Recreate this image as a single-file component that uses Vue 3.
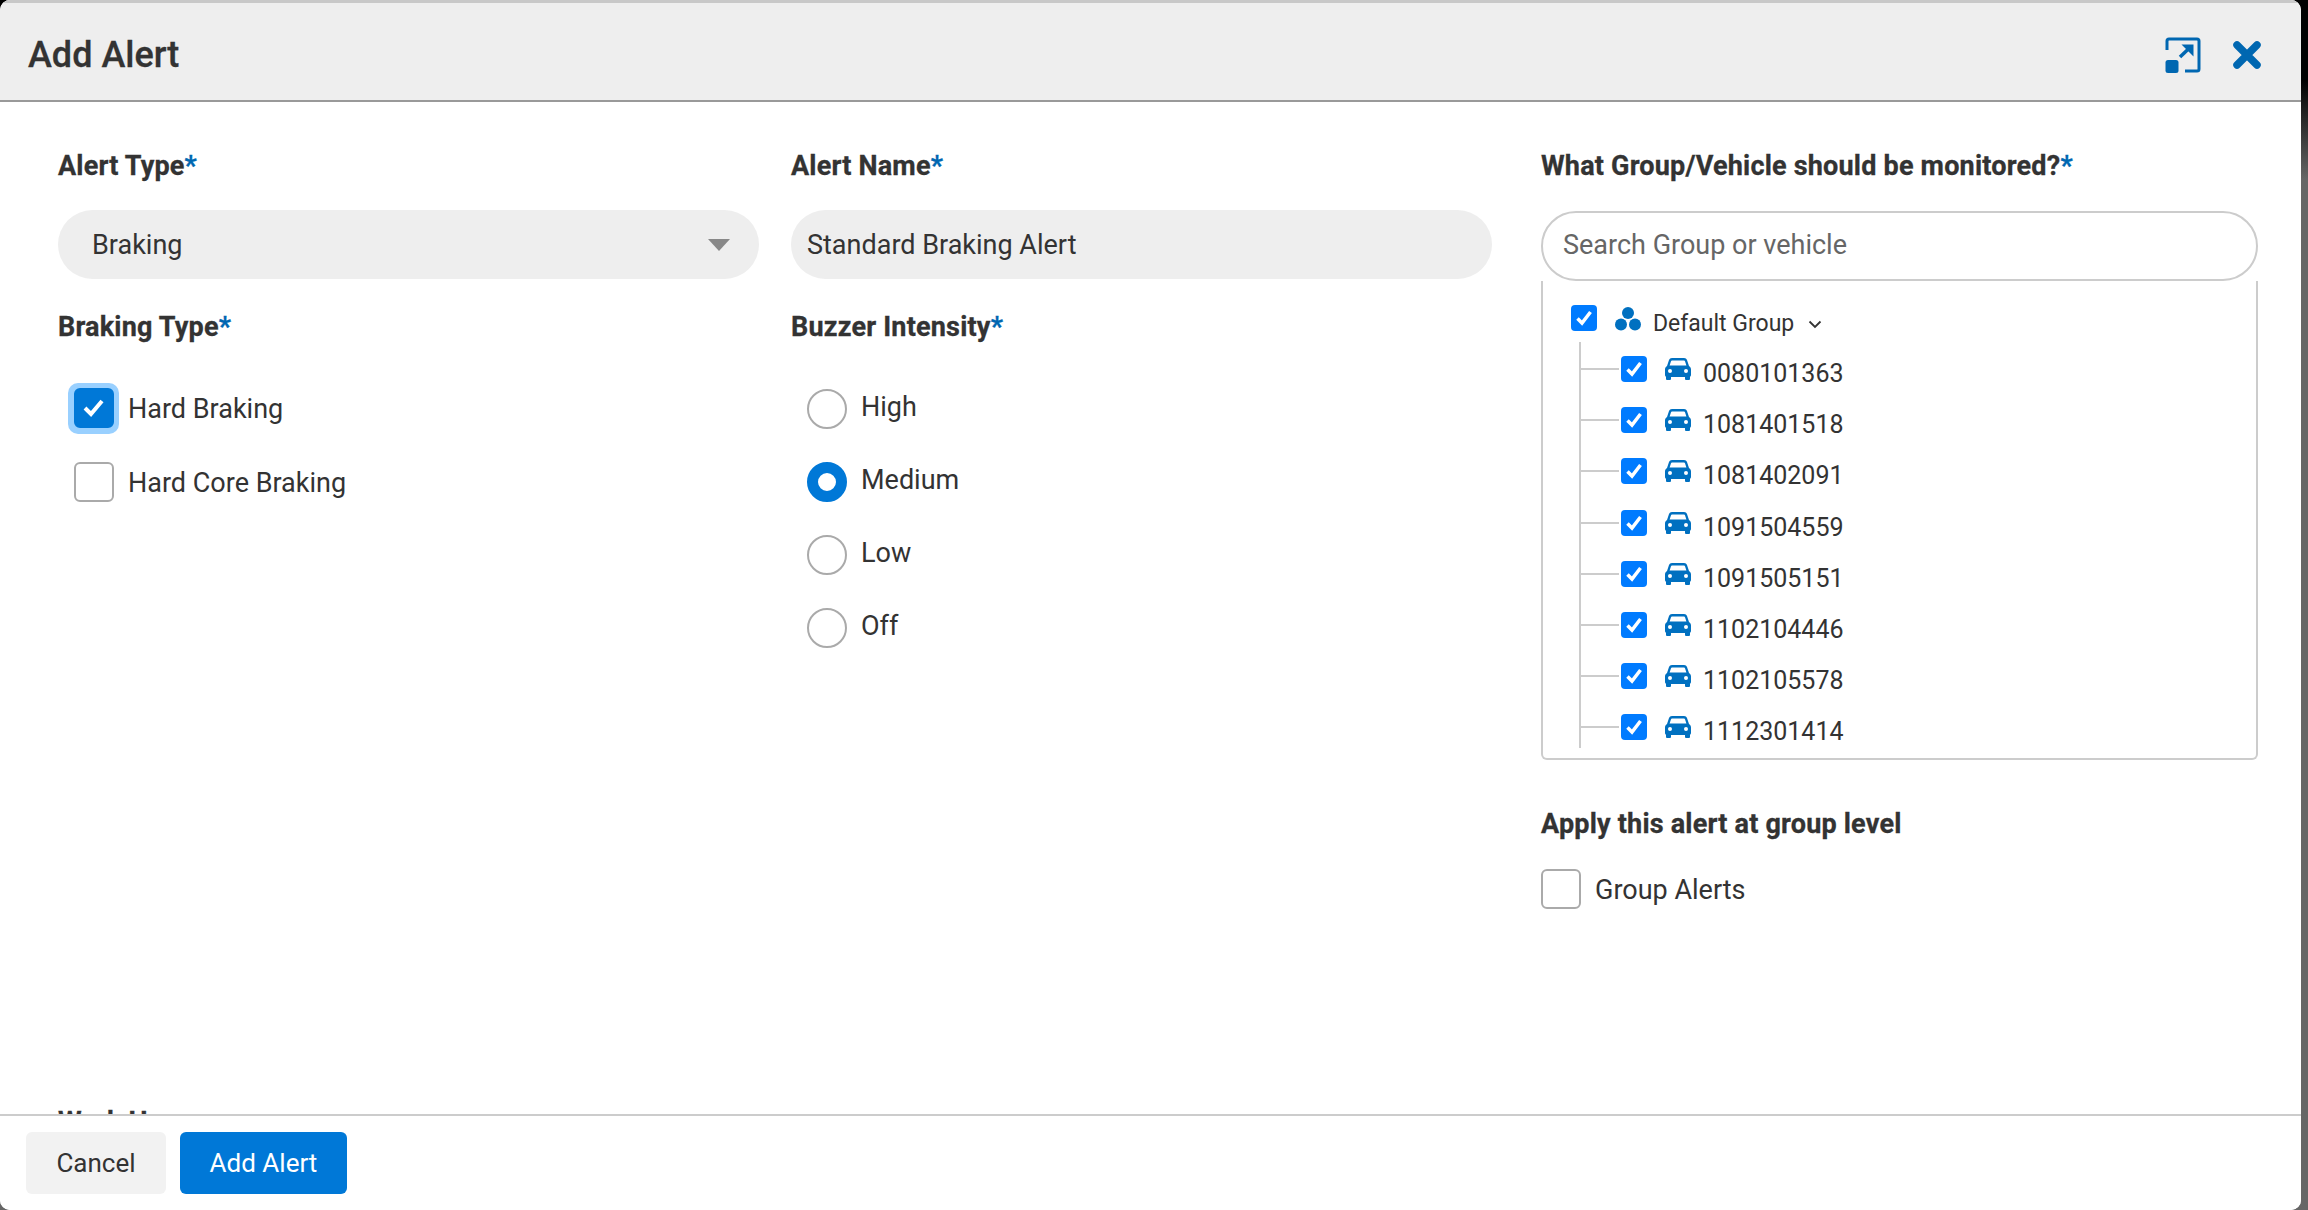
<script setup>
const units = ['0080101363', '1081401518', '1081402091', '1091504559', '1091505151', '1102104446', '1102105578', '1112301414']
const levels = [
  { name: 'High', on: false },
  { name: 'Medium', on: true },
  { name: 'Low', on: false },
  { name: 'Off', on: false },
]
</script>

<template>
  <div class="modal">
    <header class="head">
      <h1>Add Alert</h1>
      <div class="head-icons">
        <svg width="36" height="36" viewBox="0 0 36 36" fill="none">
          <path d="M2 13V4a2 2 0 0 1 2-2h28a2 2 0 0 1 2 2v28a2 2 0 0 1-2 2H20" stroke="#0067b1" stroke-width="3"/>
          <rect x="0.5" y="23" width="13" height="13" rx="2.5" fill="#0067b1"/>
          <path d="M15 20 26 9.500" stroke="#0067b1" stroke-width="3.500"/>
          <path d="M16.500 7.500H28.500V19.500Z" fill="#0067b1"/>
        </svg>
        <svg width="28" height="28" viewBox="0 0 28 28">
          <path d="M4 4 24 24M24 4 4 24" stroke="#0067b1" stroke-width="7.500" stroke-linecap="round"/>
        </svg>
      </div>
    </header>

    <div class="body">
      <div class="columns">
        <section class="col">
          <label class="lbl">Alert Type<span>*</span></label>
          <div class="pill select"><span class="val">Braking</span><i class="caret"></i></div>
          <label class="lbl second">Braking Type<span>*</span></label>
          <div class="checks">
            <div class="check-row">
              <span class="focus">
                <span class="box on">
                  <svg width="26" height="22" viewBox="0 0 26 22"><path d="M4 11l6 6L21 4" fill="none" stroke="#fff" stroke-width="4"/></svg>
                </span>
              </span>
              <span class="txt">Hard Braking</span>
            </div>
            <div class="check-row"><span class="box"></span><span class="txt">Hard Core Braking</span></div>
          </div>
        </section>

        <section class="col">
          <label class="lbl">Alert Name<span>*</span></label>
          <div class="pill name"><span class="val">Standard Braking Alert</span></div>
          <label class="lbl second">Buzzer Intensity<span>*</span></label>
          <div class="radios">
            <div v-for="l in levels" :key="l.name" class="radio-row">
              <span class="radio" :class="{ on: l.on }"></span><span class="radio-txt">{{ l.name }}</span>
            </div>
          </div>
        </section>

        <section class="col wide">
          <label class="lbl">What Group/Vehicle should be monitored?<span>*</span></label>
          <div class="search">Search Group or vehicle</div>
          <div class="tree">
            <div class="group-row">
              <span class="tick">
                <svg width="20" height="20" viewBox="0 0 20 20"><path d="M3.500 10.500l4.500 4.500 8.500-11" fill="none" stroke="#fff" stroke-width="3.500"/></svg>
              </span>
              <svg class="group-ico" width="26" height="24" viewBox="0 0 26 24" fill="#0070c0">
                <circle cx="13" cy="6" r="6"/><circle cx="6" cy="17.500" r="6"/><circle cx="20" cy="17.500" r="6"/>
              </svg>
              <span class="group-name">Default Group</span>
              <svg class="chev" width="14" height="9" viewBox="0 0 14 9"><path d="M1.500 1.500 7 7l5.500-5.500" fill="none" stroke="#333" stroke-width="1.800"/></svg>
            </div>
            <ul class="units">
              <li v-for="u in units" :key="u">
                <span class="tick">
                  <svg width="20" height="20" viewBox="0 0 20 20"><path d="M3.500 10.500l4.500 4.500 8.500-11" fill="none" stroke="#fff" stroke-width="3.500"/></svg>
                </span>
                <svg class="car" width="26" height="22" viewBox="0 0 26 22">
                  <path fill="#0070c0" fill-rule="evenodd" d="M7 0h12c1.500 0 2.500.8 3 2l2 6c1.300.8 2 2 2 3.500V17c0 .8-.5 1.400-1 1.700V21a1 1 0 0 1-1 1h-3a1 1 0 0 1-1-1v-2H6v2a1 1 0 0 1-1 1H2a1 1 0 0 1-1-1v-2.300C.5 18.400 0 17.800 0 17v-5.500C0 10 .7 8.800 2 8l2-6c.5-1.200 1.500-2 3-2zM7 2.500c-.5 0-.8.300-1 .7L4.600 7.500h16.800L20 3.200c-.2-.4-.5-.7-1-.7zM5 11a2 2 0 1 0 0 4 2 2 0 0 0 0-4zm16 0a2 2 0 1 0 0 4 2 2 0 0 0 0-4z"/>
                </svg>
                <span class="unit-no">{{ u }}</span>
              </li>
            </ul>
          </div>
          <label class="lbl apply">Apply this alert at group level</label>
          <div class="check-row group-alerts"><span class="box"></span><span class="txt">Group Alerts</span></div>
        </section>
      </div>
      <label class="lbl work">Work Hours</label>
    </div>

    <footer class="foot">
      <button class="btn cancel">Cancel</button>
      <button class="btn primary">Add Alert</button>
    </footer>
  </div>
</template>

<style>
html, body {
  margin: 0;
  background: linear-gradient(#000 0, #000 80px, #666 180px) no-repeat;
  background-color: #666;
}
</style>

<style scoped>
.modal {
  width: 2301px;
  height: 1210px;
  box-sizing: border-box;
  display: flex;
  flex-direction: column;
  background: #fff;
  border-radius: 10px;
  overflow: hidden;
  font-family: Roboto, "Liberation Sans", sans-serif;
  color: #333;
}

.head {
  height: 102px;
  flex-shrink: 0;
  box-sizing: border-box;
  display: flex;
  align-items: center;
  justify-content: space-between;
  padding: 6px 40px 0 28px;
  background: #eee;
  border-top: 3px solid #c8c8c8;
  border-bottom: 2px solid #999;
}

h1 {
  margin: 0;
  font-size: 36px;
  font-weight: 500;
  -webkit-text-stroke: 0.3px #333;
}

.head-icons {
  display: flex;
  align-items: center;
  gap: 32px;
}

.body {
  flex: 1;
  min-height: 0;
  overflow: hidden;
  padding: 47px 43px 0 58px;
}

.columns {
  display: flex;
  gap: 32px;
  height: 956px;
}

.col {
  width: 701px;
  flex-shrink: 0;
}

.wide {
  width: 717px;
  margin-left: 17px;
}

.lbl {
  display: block;
  height: 32px;
  margin-top: 1px;
  margin-bottom: -1px;
  line-height: 32px;
  font-size: 27px;
  font-weight: 700;
  letter-spacing: 0.2px;
  -webkit-text-stroke: 0.3px #333;
}

.lbl span {
  color: #0067b1;
  -webkit-text-stroke: 0.3px #0067b1;
}

.pill {
  height: 69px;
  margin-top: 29px;
  border-radius: 35px;
  background: #eee;
  line-height: 68px;
  font-size: 27px;
}

.val {
  position: relative;
  top: 1px;
}

.select {
  position: relative;
  padding-left: 34px;
}

.name {
  padding-left: 16px;
}

.caret {
  position: absolute;
  right: 29px;
  top: 29px;
  border-left: 11px solid transparent;
  border-right: 11px solid transparent;
  border-top: 12px solid #888;
}

.second {
  margin-top: 32px;
}

.checks {
  margin-top: 46px;
  padding-left: 16px;
}

.check-row {
  display: flex;
  align-items: center;
  gap: 14px;
  height: 40px;
  font-size: 27px;
  margin-bottom: 34px;
}

.txt {
  margin-top: 2px;
}

.focus {
  width: 51px;
  height: 51px;
  margin: 0 -5px 0 -6px;
  box-sizing: border-box;
  display: flex;
  align-items: center;
  justify-content: center;
  flex-shrink: 0;
  background: #99d0ff;
  border-radius: 10px;
}

.box {
  width: 40px;
  height: 40px;
  box-sizing: border-box;
  flex-shrink: 0;
  display: flex;
  align-items: center;
  justify-content: center;
  border: 2px solid #aaa;
  border-radius: 6px;
}

.box.on {
  background: #0078d7;
  border-color: #0078d7;
}

.radios {
  margin-top: 47px;
  padding-left: 16px;
}

.radio-row {
  display: flex;
  align-items: center;
  gap: 14px;
  height: 40px;
  margin-bottom: 33px;
  font-size: 27px;
}

.radio-txt {
  margin-bottom: 4px;
}

.radio {
  width: 40px;
  height: 40px;
  box-sizing: border-box;
  flex-shrink: 0;
  border: 2px solid #aaa;
  border-radius: 50%;
}

.radio.on {
  border: 11px solid #0078d7;
}

.search {
  height: 70px;
  box-sizing: border-box;
  margin-top: 30px;
  padding-left: 20px;
  border: 2px solid #ccc;
  border-radius: 35px;
  line-height: 64px;
  font-size: 27px;
  color: #666;
}

.tree {
  height: 479px;
  box-sizing: border-box;
  padding: 24px 0 0 28px;
  border: 2px solid #ccc;
  border-top: 0;
  border-radius: 0 0 6px 6px;
}

.tick {
  width: 26px;
  height: 26px;
  flex-shrink: 0;
  display: flex;
  align-items: center;
  justify-content: center;
  background: #007bff;
  border-radius: 4px;
}

.group-row {
  display: flex;
  align-items: flex-start;
  height: 37px;
}

.group-ico {
  margin: 2px 12px 0 18px;
}

.group-name {
  font-size: 23px;
  line-height: 37px;
}

.chev {
  margin: 15px 0 0 14px;
}

.units {
  list-style: none;
  margin: 0 0 0 8px;
  padding: 14px 0 0 40px;
  height: 406px;
  box-sizing: border-box;
  border-left: 2px solid #ccc;
}

.units li {
  position: relative;
  display: flex;
  align-items: flex-start;
  height: 51.200px;
}

.units li::before {
  content: "";
  position: absolute;
  left: -40px;
  top: 12px;
  width: 38px;
  height: 2px;
  background: #ccc;
}

.car {
  margin: 2px 12px 0 18px;
}

.unit-no {
  font-size: 25px;
  line-height: 36px;
}

.apply {
  margin-top: 48px;
}

.group-alerts {
  margin-top: 30px;
}

.foot {
  height: 96px;
  flex-shrink: 0;
  box-sizing: border-box;
  display: flex;
  gap: 14px;
  padding: 16px 0 0 26px;
  background: #fff;
  border-top: 2px solid #ccc;
}

.btn {
  height: 62px;
  border: 0;
  border-radius: 6px;
  font-family: inherit;
  font-size: 26px;
}

.cancel {
  width: 140px;
  background: #f2f2f2;
  color: #333;
}

.primary {
  width: 167px;
  background: #0078d7;
  color: #fff;
}
</style>
